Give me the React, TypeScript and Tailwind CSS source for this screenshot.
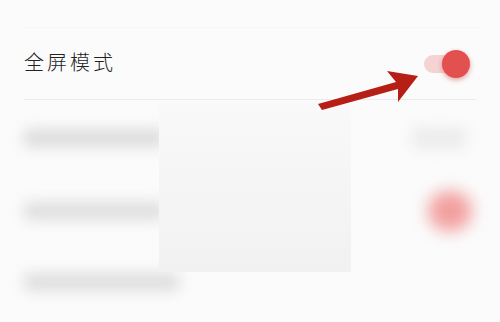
import React from "react";

function BlurBar({ className }: { className: string }) {
  return <div className={`rounded-sm blur-[7px] ${className}`} />;
}

export default function App() {
  return (
    <div className="relative w-[500px] h-[322px] overflow-hidden bg-[#fbfbfb] font-['Noto_Sans_CJK_SC',sans-serif]">
      <div className="h-[28px] mx-5 border-b border-[#f7f7f7]" />

      {/* full screen row */}
      <div className="h-[72px] mx-6 flex items-center justify-between border-b border-[#ebebeb]">
        <span className="text-[20px] tracking-[3px] text-[#222] font-light -mt-1">全屏模式</span>
        <div className="relative w-[46px] h-[30px] mr-[6px] flex items-center">
          <div className="w-[32px] h-[18px] rounded-full bg-[#f6d3d3]" />
          <div className="absolute right-0 w-[28px] h-[28px] rounded-full bg-[#e2504f] shadow-[0_2px_5px_rgba(200,60,60,0.45)]" />
        </div>
      </div>

      {/* blurred rows */}
      <div className="h-[76px] px-6 flex items-center justify-between">
        <BlurBar className="w-[140px] h-[18px] bg-[#dcdcdc]" />
        <BlurBar className="w-[54px] h-[22px] bg-[#ececec] mr-[10px]" />
      </div>
      <div className="h-[70px] px-6 flex items-center justify-between">
        <BlurBar className="w-[140px] h-[18px] bg-[#dedede]" />
        <div className="w-[44px] h-[40px] rounded-full bg-[#f2a0a0] blur-[8px] mr-[4px]" />
      </div>
      <div className="h-[72px] px-6 flex items-center justify-between">
        <BlurBar className="w-[155px] h-[18px] bg-[#dedede]" />
      </div>

      {/* masking panel */}
      <div className="absolute left-[159px] top-[102px] w-[192px] h-[170px] bg-gradient-to-b from-[#f9f9f9] to-[#f1f1f1]" />

      {/* annotation arrow */}
      <svg className="absolute left-0 top-0" width="500" height="322" viewBox="0 0 500 322">
        <path
          d="M318 104 L396 82 L387 71 L418 76 L398 102 L398 89 L322 110 Z"
          fill="#b51f16"
        />
      </svg>
    </div>
  );
}
